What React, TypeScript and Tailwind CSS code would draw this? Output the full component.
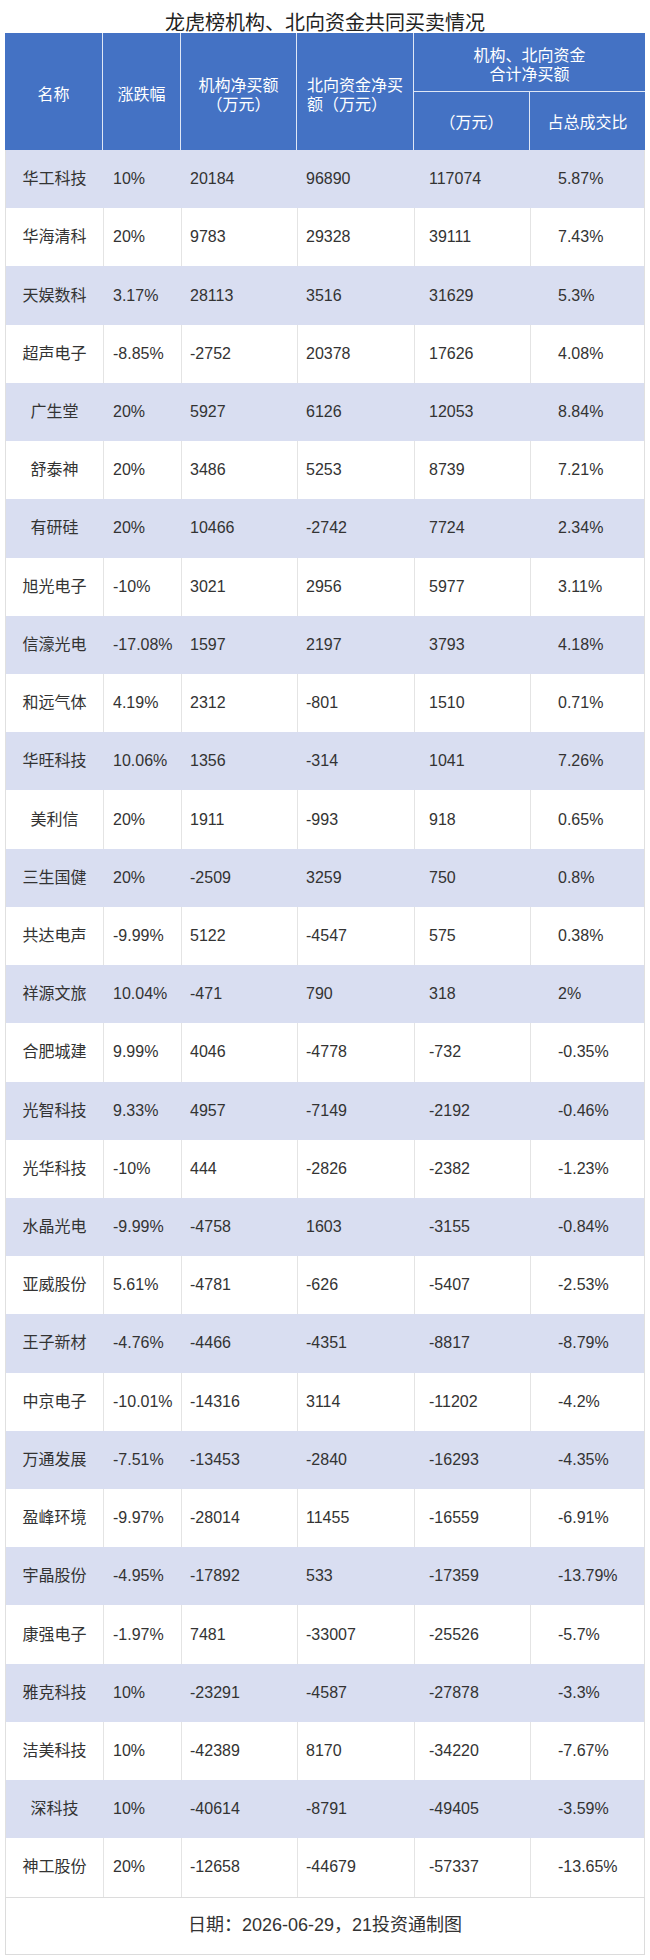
const rows: string[][] = [
  ["华工科技", "10%", "20184", "96890", "117074", "5.87%"],
  ["华海清科", "20%", "9783", "29328", "39111", "7.43%"],
  ["天娱数科", "3.17%", "28113", "3516", "31629", "5.3%"],
  ["超声电子", "-8.85%", "-2752", "20378", "17626", "4.08%"],
  ["广生堂", "20%", "5927", "6126", "12053", "8.84%"],
  ["舒泰神", "20%", "3486", "5253", "8739", "7.21%"],
  ["有研硅", "20%", "10466", "-2742", "7724", "2.34%"],
  ["旭光电子", "-10%", "3021", "2956", "5977", "3.11%"],
  ["信濠光电", "-17.08%", "1597", "2197", "3793", "4.18%"],
  ["和远气体", "4.19%", "2312", "-801", "1510", "0.71%"],
  ["华旺科技", "10.06%", "1356", "-314", "1041", "7.26%"],
  ["美利信", "20%", "1911", "-993", "918", "0.65%"],
  ["三生国健", "20%", "-2509", "3259", "750", "0.8%"],
  ["共达电声", "-9.99%", "5122", "-4547", "575", "0.38%"],
  ["祥源文旅", "10.04%", "-471", "790", "318", "2%"],
  ["合肥城建", "9.99%", "4046", "-4778", "-732", "-0.35%"],
  ["光智科技", "9.33%", "4957", "-7149", "-2192", "-0.46%"],
  ["光华科技", "-10%", "444", "-2826", "-2382", "-1.23%"],
  ["水晶光电", "-9.99%", "-4758", "1603", "-3155", "-0.84%"],
  ["亚威股份", "5.61%", "-4781", "-626", "-5407", "-2.53%"],
  ["王子新材", "-4.76%", "-4466", "-4351", "-8817", "-8.79%"],
  ["中京电子", "-10.01%", "-14316", "3114", "-11202", "-4.2%"],
  ["万通发展", "-7.51%", "-13453", "-2840", "-16293", "-4.35%"],
  ["盈峰环境", "-9.97%", "-28014", "11455", "-16559", "-6.91%"],
  ["宇晶股份", "-4.95%", "-17892", "533", "-17359", "-13.79%"],
  ["康强电子", "-1.97%", "7481", "-33007", "-25526", "-5.7%"],
  ["雅克科技", "10%", "-23291", "-4587", "-27878", "-3.3%"],
  ["洁美科技", "10%", "-42389", "8170", "-34220", "-7.67%"],
  ["深科技", "10%", "-40614", "-8791", "-49405", "-3.59%"],
  ["神工股份", "20%", "-12658", "-44679", "-57337", "-13.65%"],
];

const cols = "grid grid-cols-[97px_78px_116px_117px_116px_116px]";
const font = { fontFamily: '"Liberation Sans", "Noto Sans CJK SC", sans-serif' };

function DataRow({ cells, shaded }: { cells: string[]; shaded: boolean }) {
  const bg = shaded ? "bg-[#d9def1]" : "bg-white";
  const line = shaded ? "border-[#d9def1]" : "border-[#e4e4e4]";
  return (
    <div className={`${cols} h-[58.23px] ${bg} text-[16px] text-[#333]`}>
      <div className="flex items-center justify-center whitespace-nowrap">{cells[0]}</div>
      <div className={`flex items-center whitespace-nowrap border-l ${line} pl-[9px]`}>{cells[1]}</div>
      <div className={`flex items-center whitespace-nowrap border-l ${line} pl-[8px]`}>{cells[2]}</div>
      <div className={`flex items-center whitespace-nowrap border-l ${line} pl-[8px]`}>{cells[3]}</div>
      <div className={`flex items-center whitespace-nowrap border-l ${line} pl-[14px]`}>{cells[4]}</div>
      <div className={`flex items-center whitespace-nowrap border-l ${line} pl-[27px]`}>{cells[5]}</div>
    </div>
  );
}

export default function App() {
  return (
    <div className="w-[650px] h-[1960px] bg-white px-[5px]" style={font}>
      <div className="h-[33px] pt-[11px] text-center text-[20px] leading-[24px] text-[#222]">
        龙虎榜机构、北向资金共同买卖情况
      </div>

      <div className={`${cols} grid-rows-[59px_58px] bg-[#4472c4] text-[16px] leading-[19px] text-white`}>
        <div className="row-span-2 flex items-center justify-center pt-[6px]">名称</div>
        <div className="row-span-2 flex items-center justify-center border-l-[1.5px] border-[#dfe7f6] pt-[6px]">涨跌幅</div>
        <div className="row-span-2 flex items-center justify-center border-l-[1.5px] border-[#dfe7f6] pt-[6px] text-center">
          机构净买额
          <br />
          （万元）
        </div>
        <div className="row-span-2 flex items-center border-l-[1.5px] border-[#dfe7f6] pl-[10px] pr-[6px] pt-[6px]">
          北向资金净买额（万元）
        </div>
        <div className="col-span-2 flex items-center justify-center border-l-[1.5px] border-b-[1.5px] border-[#dfe7f6] pt-[6px] text-center">
          机构、北向资金
          <br />
          合计净买额
        </div>
        <div className="flex items-center justify-center border-l-[1.5px] border-[#dfe7f6] pt-[2px]">（万元）</div>
        <div className="flex items-center justify-center border-l-[1.5px] border-[#dfe7f6] pt-[2px]">占总成交比</div>
      </div>

      <div className="border-x border-[#e0e0e0]">
        {rows.map((r, i) => (
          <DataRow key={r[0]} cells={r} shaded={i % 2 === 0} />
        ))}
      </div>

      <div className="flex h-[58px] items-center justify-center border border-[#dcdcdc] text-[18px] text-[#333]">
        日期：2026-06-29，21投资通制图
      </div>
    </div>
  );
}
